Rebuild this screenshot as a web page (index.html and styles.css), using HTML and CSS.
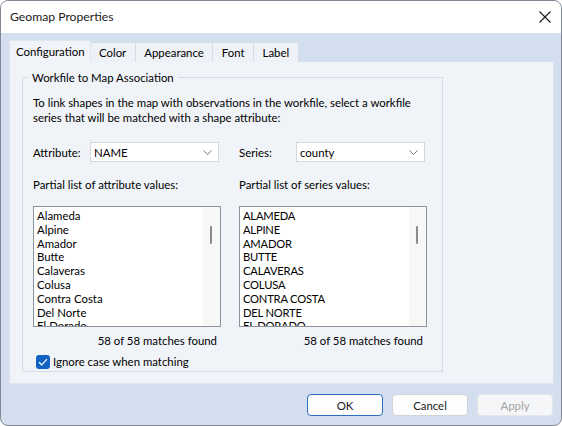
FILE: index.html
```html
<!DOCTYPE html>
<html>
<head>
<meta charset="utf-8">
<link rel="stylesheet" href="styles.css">
</head>
<body>
<div class="window">
  <div class="titlebar">
    <span class="title">Geomap Properties</span>
    <svg class="close" width="12" height="12" viewBox="0 0 12 12"><path d="M0.5 0.5 L11.5 11.5 M11.5 0.5 L0.5 11.5" stroke="#1a1a1a" stroke-width="1.1" fill="none"/></svg>
  </div>
  <div class="body">
    <div class="tabs">
      <div class="tab active">Configuration</div>
      <div class="tab">Color</div>
      <div class="tab">Appearance</div>
      <div class="tab">Font</div>
      <div class="tab">Label</div>
    </div>
    <div class="panel">
      <fieldset class="group">
        <legend>Workfile to Map Association</legend>
        <p class="desc">To link shapes in the map with observations in the workfile, select a workfile<br>series that will be matched with a shape attribute:</p>
        <div class="cols">
          <div class="col">
            <div class="field">
              <span class="flabel">Attribute:</span>
              <div class="combo"><span>NAME</span><svg width="9" height="5" viewBox="0 0 9 5"><path d="M0.5 0.5 L4.5 4.5 L8.5 0.5" stroke="#7a7a7a" fill="none"/></svg></div>
            </div>
            <div class="label">Partial list of attribute values:</div>
            <div class="listbox">
              <div class="items">
                <div>Alameda</div><div>Alpine</div><div>Amador</div><div>Butte</div><div>Calaveras</div><div>Colusa</div><div>Contra Costa</div><div>Del Norte</div><div>El Dorado</div>
              </div>
              <div class="scroll"><div class="thumb"></div></div>
            </div>
            <div class="matches">58 of 58 matches found</div>
            <label class="check"><span class="box"><svg width="10" height="8" viewBox="0 0 10 8"><path d="M1 4.2 L3.7 6.8 L9 1.2" stroke="#fff" stroke-width="1.2" fill="none"/></svg></span>Ignore case when matching</label>
          </div>
          <div class="col">
            <div class="field">
              <span class="flabel">Series:</span>
              <div class="combo"><span>county</span><svg width="9" height="5" viewBox="0 0 9 5"><path d="M0.5 0.5 L4.5 4.5 L8.5 0.5" stroke="#7a7a7a" fill="none"/></svg></div>
            </div>
            <div class="label">Partial list of series values:</div>
            <div class="listbox">
              <div class="items caps">
                <div>ALAMEDA</div><div>ALPINE</div><div>AMADOR</div><div>BUTTE</div><div>CALAVERAS</div><div>COLUSA</div><div>CONTRA COSTA</div><div>DEL NORTE</div><div>EL DORADO</div>
              </div>
              <div class="scroll"><div class="thumb"></div></div>
            </div>
            <div class="matches">58 of 58 matches found</div>
          </div>
        </div>
      </fieldset>
    </div>
    <div class="buttons">
      <button class="btn default">OK</button>
      <button class="btn">Cancel</button>
      <button class="btn disabled">Apply</button>
    </div>
  </div>
</div>
</body>
</html>
```

FILE: styles.css
```css
* { box-sizing: border-box; }
html, body { margin: 0; padding: 0; background: #fff; }
body {
  font-family: "Lato", "Noto Sans", sans-serif;
  font-size: 11.4px;
  color: #000;
}
.window {
  width: 562px;
  height: 426px;
  border: 1px solid #7f8894;
  border-radius: 8px;
  overflow: hidden;
  display: flex;
  flex-direction: column;
  background: #d3dfee;
}
.titlebar {
  height: 32px;
  flex: none;
  background: #fff;
  display: flex;
  align-items: center;
  justify-content: space-between;
  padding: 0 10px 0 9px;
}
.title { font-size: 12.2px; line-height: 16px; color: #1a1a1a; }
.close { display: block; }
.body {
  flex: 1;
  display: flex;
  flex-direction: column;
  padding: 7px 7px 0 8px;
}
.tabs {
  height: 22px;
  flex: none;
  display: flex;
  align-items: flex-end;
}
.tab {
  height: 20px;
  line-height: 19px;
  padding: 0 8.5px;
  background: #eef1f5;
  border: 1px solid #d6dce4;
  border-bottom: none;
  margin-left: -1px;
  color: #000;
}
.tab.active {
  height: 22px;
  line-height: 21px;
  background: #f0f4f9;
  border-color: #dfe5ec;
  margin-left: 0;
  padding: 0 5px 0 6px;
  position: relative;
  z-index: 1;
}
.panel {
  flex: 1;
  background: #f0f4f9;
  border: 1px solid #dfe5ec;
  border-top: none;
  padding: 8px 12px 0 12px;
}
.group {
  width: 421px;
  height: 302px;
  margin: 0;
  padding: 0 0 0 10px;
  border: 1px solid #d5dbe2;
  min-width: 0;
}
.group legend {
  padding: 0 4px;
  margin-left: -5px;
  line-height: 15px;
}
.desc {
  margin: 11px 0 0 0;
  line-height: 14.5px;
  white-space: nowrap;
}
.cols {
  display: grid;
  grid-template-columns: 188px 188px;
  column-gap: 18px;
  margin-top: 17px;
}
.col { display: flex; flex-direction: column; }
.field {
  display: flex;
  align-items: center;
  height: 20px;
}
.flabel { width: 57px; flex: none; }
.combo {
  width: 129px;
  height: 20px;
  background: #fff;
  border: 1px solid #d4d8dd;
  display: flex;
  align-items: center;
  justify-content: space-between;
  padding: 0 6px 0 3px;
}
.label { margin-top: 15px; line-height: 15px; }
.listbox {
  margin-top: 14px;
  width: 188px;
  height: 121px;
  background: #fff;
  border: 1px solid #8d949c;
  display: flex;
  overflow: hidden;
}
.items {
  flex: 1;
  padding: 2px 0 0 3px;
  line-height: 13.8px;
  overflow: hidden;
}
.items.caps { font-size: 11.2px; letter-spacing: -0.2px; }
.scroll {
  width: 17px;
  flex: none;
  background: #f7f7f7;
  padding: 19px 0 0 7px;
}
.thumb {
  width: 2px;
  height: 18px;
  background: #8a8a8a;
  border-radius: 1px;
}
.matches {
  text-align: right;
  padding-right: 4px;
  margin-top: 6px;
  line-height: 15px;
}
.check {
  display: flex;
  align-items: center;
  margin-top: 6px;
  margin-left: 3px;
  line-height: 15px;
}
.box {
  width: 14px;
  height: 14px;
  border-radius: 3px;
  background: #1164c4;
  display: flex;
  align-items: center;
  justify-content: center;
  margin-right: 3px;
}
.box svg { display: block; }
.buttons {
  flex: none;
  display: flex;
  justify-content: flex-end;
  gap: 9px;
  height: 22px;
  margin: 10px 1px 9px 0;
}
.btn {
  width: 76px;
  height: 22px;
  font-family: inherit;
  font-size: 11.4px;
  background: #fdfdfd;
  border: 1px solid #d0d4d9;
  border-radius: 4px;
  color: #1a1a1a;
  padding: 0;
}
.btn.default { border-color: #2a6fc0; }
.btn.disabled { background: #f5f6f8; color: #a3a3a3; border-color: #e4e6e9; }
```
